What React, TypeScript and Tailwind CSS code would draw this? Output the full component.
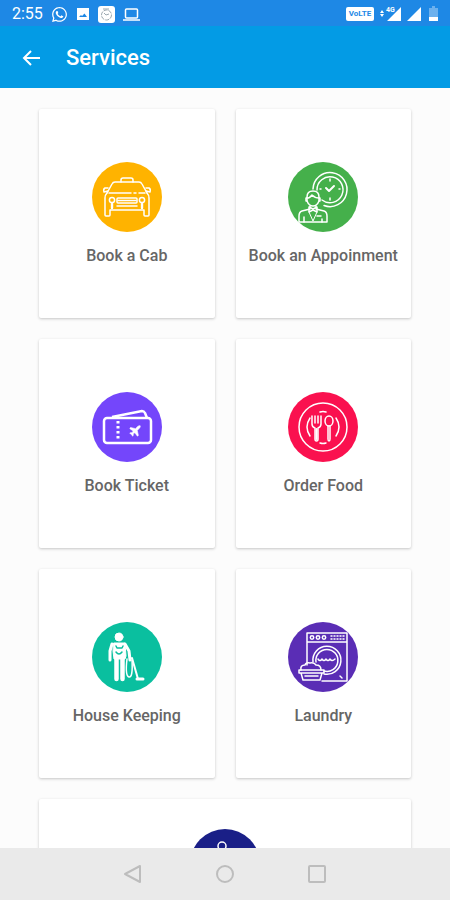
import React from 'react';
import { FaWhatsapp } from 'react-icons/fa';

const CabIcon = () => (
  <svg viewBox="0 0 70 70" className="size-full" fill="none" stroke="white" strokeWidth="1.5" strokeLinejoin="round" strokeLinecap="round">
    <path d="M29 20v-2q0-2 2-2h8q2 0 2 2v2" />
    <path d="M15 31l5-9q1-2 3-2h24q2 0 3 2l5 9" />
    <path d="M17 31h22M42 31h2M47 31h6" />
    <path d="M15 31q-2 2-2 5v17q0 1 1 1h3q1 0 1-1v-5h34v5q0 1 1 1h3q1 0 1-1V36q0-3-2-5" />
    <path d="M16 29l-4 1q-1-3 1-4h3M54 29l4 1q1-3-1-4h-3" />
    <circle cx="20" cy="38" r="2.6" />
    <circle cx="50" cy="38" r="2.6" />
    <path d="M20 42v4M50 42v4" strokeWidth="2.4" />
    <rect x="25" y="36" width="20" height="5" rx="1" />
    <path d="M26 38.5h18M25 44h20" />
  </svg>
);

const AppointmentIcon = () => (
  <svg viewBox="0 0 70 70" className="size-full" fill="none" stroke="white" strokeWidth="1.5" strokeLinejoin="round" strokeLinecap="round">
    <path d="M25 27A17 17 0 1 1 36 43.500" />
    <path d="M29 28A13 13 0 1 1 34 38" />
    <path d="M38 26l3 3 5-5" strokeWidth="2" />
    <path d="M42 17v2M42 36v2M32 27h1M51 27h1" />
    <path d="M19 39v-4q0-6 6-6t6 6v4q-2 5-6 5t-6-5z" />
    <path d="M19 36q3 0 5-3 3 3 7 3M19 36h-1v3h1M31 36h1v3h-1" />
    <path d="M22 44v3l-8 2q-3 1-3 5v6h28v-6q0-4-3-5l-8-2v-3" />
    <path d="M21 45l4 2 4-2v5l-4-2-4 2zM16 55v5M34 57v3M29 54h4" />
    <path d="M21 50l4 9 4-9" strokeWidth="1" />
  </svg>
);

const TicketIcon = () => (
  <svg viewBox="0 0 70 70" className="size-full" fill="none" stroke="white" strokeWidth="2.5" strokeLinejoin="round">
    <rect x="12" y="26" width="47" height="25" rx="3" />
    <path d="M20 25l30-6q2 0 3 2l2 5" />
    <path d="M26 29v19" strokeDasharray="2.5 2.5" strokeWidth="3" />
    <path
      transform="translate(36 32) scale(0.58)"
      d="M17.8 19.2 16 11l3.5-3.5C21 6 21.5 4 21 3c-1-.5-3 0-4.500 1.500L13 8 4.800 6.200c-.5-.1-.9.1-1.100.5l-.3.5c-.2.5-.1 1 .3 1.300L9 12l-2 3H4l-1 1 3 2 2 3 1-1v-3l3-2 3.500 5.300c.3.4.8.5 1.300.3l.5-.2c.4-.3.6-.7.5-1.200z"
      fill="white"
      strokeWidth="1"
    />
  </svg>
);

const FoodIcon = () => (
  <svg viewBox="0 0 70 70" className="size-full" fill="none" stroke="white" strokeWidth="1.5" strokeLinecap="round" strokeLinejoin="round">
    <circle cx="35" cy="35" r="24" />
    <path d="M22 26q-6 9 0 18M48 26q6 9 0 18M32 20q3-1 6 0M32 51q3 1 6 0" />
    <path d="M24 24v8q0 3 3 4v11q0 2 1.5 2t1.5-2V36q3-1 3-4v-8M27 24v7M30 24v7" />
    <path d="M28.5 37v10" strokeWidth="2" />
    <ellipse cx="41" cy="29" rx="4" ry="5" />
    <path d="M40 34v13q0 2 1 2t1-2V34" />
  </svg>
);

const HouseKeepingIcon = () => (
  <svg viewBox="0 0 70 70" className="size-full" fill="none" stroke="white" strokeLinecap="round" strokeLinejoin="round">
    <circle cx="27" cy="15" r="4" fill="white" />
    <path d="M22 21h11l1 13-1 3H22l-1-8z" fill="white" />
    <path d="M20 22l-2 7v9M33 22l4 7 1 9" strokeWidth="3" />
    <path d="M24.5 37v20M30.5 37v20" strokeWidth="4.5" />
    <path d="M24 24l1 2h5l1-2M24 30q3 4 6 0" stroke="#0abf9f" strokeWidth="1.5" />
    <path d="M35 37q-2 17 2 18t3-17" strokeWidth="1.5" />
    <path d="M40 36l6 21" strokeWidth="2" />
    <path d="M45 57h6" strokeWidth="3" />
  </svg>
);

const LaundryIcon = () => (
  <svg viewBox="0 0 70 70" className="size-full" fill="none" stroke="white" strokeWidth="1.5" strokeLinecap="round" strokeLinejoin="round">
    <path d="M19 43V11h40v48H34M19 20h40" />
    <circle cx="24" cy="15.5" r="1.7" />
    <circle cx="30" cy="15.5" r="1.7" />
    <circle cx="36" cy="15.5" r="1.7" />
    <path d="M43 14h13M43 17h13" strokeDasharray="1 2" />
    <path d="M25 40A14 14 0 1 1 36 52" />
    <path d="M28 40A11 11 0 1 1 36 49" />
    <path d="M30 37q2 3 4 0 2 3 4 0 2 3 4 0 2 3 5 0" />
    <path d="M11 48h25v3H11zM13 51l2 7h17l2-7M17 54h13" />
    <path d="M13 48q-1-5 4-5 1-3 5-2 4-1 6 2 5 0 5 5" />
    <path d="M52 54l2 2" />
  </svg>
);

const MoreIcon = () => (
  <svg viewBox="0 0 70 70" className="size-full" fill="none" stroke="white" strokeWidth="1.5">
    <circle cx="32" cy="17" r="4" />
    <path d="M25 34v-6q0-5 7-5t7 5v6" />
  </svg>
);

const services = [
  { name: 'Book a Cab', color: 'bg-[#ffb300]', icon: CabIcon },
  { name: 'Book an Appoinment', color: 'bg-[#45b04b]', icon: AppointmentIcon },
  { name: 'Book Ticket', color: 'bg-[#7446fb]', icon: TicketIcon },
  { name: 'Order Food', color: 'bg-[#fa114f]', icon: FoodIcon },
  { name: 'House Keeping', color: 'bg-[#0abf9f]', icon: HouseKeepingIcon },
  { name: 'Laundry', color: 'bg-[#5a2db5]', icon: LaundryIcon },
];

const cardShadow = 'rounded-xs bg-white shadow-[0_1px_3px_rgba(0,0,0,0.22)]';

const StatusBar = () => (
  <div className="flex h-[26px] shrink-0 items-center justify-between bg-[#1e88e5] px-3 pt-[2px] text-white">
    <div className="flex items-center gap-2">
      <span className="text-base leading-5">2:55</span>
      <FaWhatsapp className="size-[17px]" />
      <svg viewBox="0 0 14 14" className="size-[14px]">
        <path fill="currentColor" fillRule="evenodd" d="M1 1h12v12H1zM3 10h8L8.5 6.5 6 9 5 8z" />
      </svg>
      <svg viewBox="0 0 17 17" className="size-[17px]" fill="none">
        <rect width="17" height="17" rx="3" fill="white" />
        <circle cx="8.5" cy="9" r="5" stroke="#9ba8b0" strokeDasharray="4 1" />
        <path d="M6 7l2 2 3-1M5 3h6" stroke="#9ba8b0" />
      </svg>
      <svg viewBox="0 0 17 13" className="h-[13px] w-[17px]" fill="none" stroke="currentColor" strokeWidth="1.5">
        <rect x="2.5" y="1" width="12" height="9" rx="1" />
        <path d="M0 12h17" />
      </svg>
    </div>
    <div className="flex items-center">
      <span className="flex h-[14px] w-7 items-center justify-center rounded-xs bg-white text-[8px] font-bold text-[#1e88e5]">VoLTE</span>
      <svg viewBox="0 0 22 16" className="ml-1.5 h-4 w-[22px]" fill="currentColor">
        <path d="M2 4l2 3H0zM2 11L0 8h4zM21 1v14H7z" />
        <text x="6" y="6" fontSize="7" fontWeight="700" fontFamily="Roboto, sans-serif">4G</text>
      </svg>
      <svg viewBox="0 0 15 16" className="ml-1 h-4 w-[15px]" fill="currentColor">
        <path d="M15 1v14H1z" />
      </svg>
      <svg viewBox="0 0 9 16" className="ml-2 h-4 w-[9px]" fill="currentColor">
        <path d="M3 0h3v2h3v9H0V2h3z" opacity="0.35" />
        <path d="M0 11h9v4H0z" />
      </svg>
    </div>
  </div>
);

const App = () => {
  return (
    <div className="flex h-screen flex-col bg-[#fcfcfc] font-[Roboto,sans-serif]">
      <StatusBar />
      <header className="flex h-[62px] shrink-0 items-center bg-[#039be5] px-5 pt-[2px] text-white">
        <button aria-label="Back" className="mr-6">
          <svg viewBox="0 0 22 22" className="size-[22px]" fill="none" stroke="currentColor" strokeWidth="2">
            <path d="M20 11H4M11 4l-7 7 7 7" />
          </svg>
        </button>
        <h1 className="text-[22px] leading-7 font-medium">Services</h1>
      </header>

      <main className="min-h-0 flex-1 overflow-y-auto px-[39px] pt-[21px] [scrollbar-width:none]">
        <div className="grid grid-cols-2 gap-[21px]">
          {services.map(({ name, color, icon: Icon }) => (
            <button key={name} className={`flex flex-col items-center pt-[53px] pb-[52px] ${cardShadow}`}>
              <span className={`size-[70px] rounded-full ${color}`}>
                <Icon />
              </span>
              <span className="mt-[14px] text-base leading-5 font-medium whitespace-nowrap text-[#666]">{name}</span>
            </button>
          ))}
          <button aria-label="More services" className={`col-span-2 flex flex-col items-center py-[30px] ${cardShadow}`}>
            <span className="size-[70px] rounded-full bg-[#1a1f87]">
              <MoreIcon />
            </span>
          </button>
        </div>
      </main>

      <nav className="flex h-[52px] shrink-0 items-center justify-center gap-[72px] bg-[#eaeaea] text-[#bdbdbd]">
        <button aria-label="Go back">
          <svg viewBox="0 0 20 20" className="size-5" fill="none" stroke="currentColor" strokeWidth="2" strokeLinejoin="round">
            <path d="M17 2v16L2 10z" />
          </svg>
        </button>
        <button aria-label="Home">
          <svg viewBox="0 0 20 20" className="size-5" fill="none" stroke="currentColor" strokeWidth="2">
            <circle cx="10" cy="10" r="8" />
          </svg>
        </button>
        <button aria-label="Recent apps">
          <svg viewBox="0 0 20 20" className="size-5" fill="none" stroke="currentColor" strokeWidth="2">
            <rect x="2" y="2" width="16" height="16" rx="1" />
          </svg>
        </button>
      </nav>
    </div>
  );
};

export default App;
